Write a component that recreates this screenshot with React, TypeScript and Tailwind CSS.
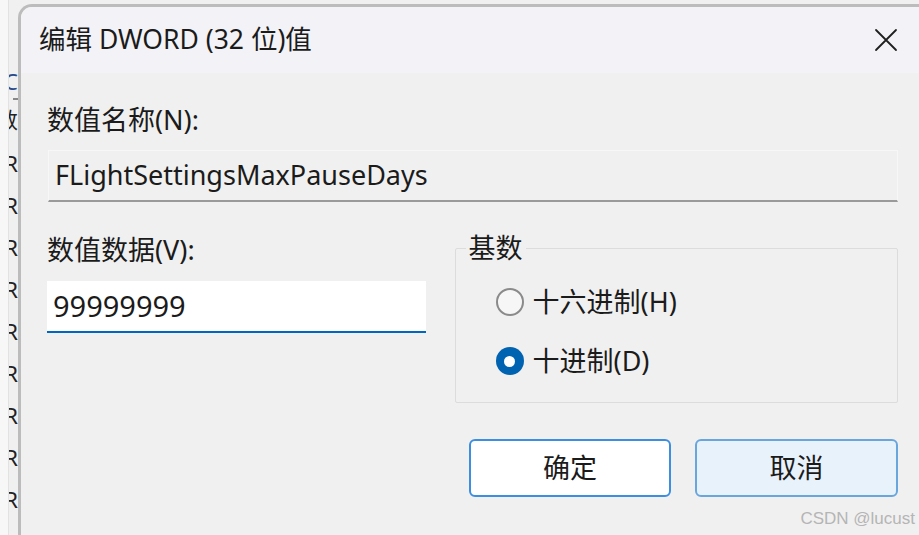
import React from "react";

const FONT = { fontFamily: '"Noto Sans", "Noto Sans CJK SC", sans-serif' };

function Radio({ checked, label }: { checked: boolean; label: string }) {
  return (
    <div className="flex items-center gap-[9px] h-[40px]">
      {checked ? (
        <div className="w-[28px] h-[28px] shrink-0 rounded-full bg-[#0063b1] flex items-center justify-center">
          <div className="w-[11px] h-[11px] rounded-full bg-white" />
        </div>
      ) : (
        <div className="w-[28px] h-[28px] shrink-0 rounded-full border-[2px] border-[#8a8a8a] bg-[#f6f6f6]" />
      )}
      <span className="text-[27px] leading-[32px] text-[#1b1b1b] whitespace-nowrap">{label}</span>
    </div>
  );
}

export default function App() {
  const bgRows = ["R", "R", "R", "R", "R", "R", "R", "R", "R"];
  return (
    <div
      className="w-[919px] h-[535px] overflow-hidden bg-[#f0f0f0] flex relative"
      style={FONT}
    >
      <div className="w-[9px] shrink-0 bg-[#f7f7f7] border-r border-[#e2e2e2]" />
      <div className="w-[9px] shrink-0 flex flex-col overflow-hidden bg-[#f0f0f0] pt-[66px]">
        <div className="h-[28px] shrink-0 flex justify-end text-[22px] leading-[30px] text-[#2a4a8a]">
          <span>C</span>
        </div>
        <div className="h-[10px] shrink-0 flex justify-end items-center">
          <div className="w-[5px] h-[2px] bg-[#888]" />
        </div>
        <div className="h-[44px] shrink-0 flex justify-end text-[22px] leading-[30px] text-[#222]">
          <span>数</span>
        </div>
        {bgRows.map((r, i) => (
          <div key={i} className="h-[42px] shrink-0 flex justify-end text-[22px] leading-[30px] text-[#222] whitespace-nowrap">
            <span>{r}</span>
          </div>
        ))}
      </div>
      <div className="flex-1 mt-[4px] rounded-tl-[14px] rounded-br-[12px] border-l-[3px] border-t-[3px] border-[#bcbcbc] flex flex-col bg-[#f0f0f0] overflow-hidden">
        <div className="h-[66px] shrink-0 bg-[#f3f3f7] flex items-center justify-between pl-[18px] pr-[20px]">
          <span className="text-[26.5px] leading-[32px] text-[#1b1b1b] mt-[-2px] whitespace-nowrap">编辑 DWORD (32 位)值</span>
          <svg width="24" height="24" viewBox="0 0 24 24" className="mr-[1px]">
            <path d="M2 2 L22 22 M22 2 L2 22" stroke="#1f1f1f" strokeWidth="1.8" strokeLinecap="round" />
          </svg>
        </div>
        <div className="flex-1 flex flex-col pl-[26px] pr-[21px] pt-[31px]">
          <div className="text-[27px] leading-[32px] text-[#1b1b1b] whitespace-nowrap">数值名称(N):</div>
          <div className="mt-[14px] h-[52px] ml-[1px] border border-[#f7f7f7] border-b-[2px] border-b-[#9a9a9a] bg-[#f0f0f0] flex items-center pl-[6px] text-[27px] text-[#1b1b1b] whitespace-nowrap">
            FLightSettingsMaxPauseDays
          </div>
          <div className="flex mt-[31px]">
            <div className="w-[379px] flex flex-col">
              <div className="text-[27px] leading-[32px] text-[#1b1b1b] mt-[1px] whitespace-nowrap">数值数据(V):</div>
              <div className="mt-[15px] h-[52px] bg-white border-b-[2px] border-[#0067c0] flex items-center pl-[6px] text-[29px] text-[#1b1b1b]">
                99999999
              </div>
            </div>
            <fieldset className="ml-[29px] w-[444px] h-[170px] border border-[#dcdcdc] rounded-[2px] p-0">
              <legend className="ml-[10px] px-[3px] text-[27px] leading-[30px] text-[#1b1b1b]">基数</legend>
              <div className="flex flex-col gap-[19px] ml-[40px] mt-[19px]">
                <Radio checked={false} label="十六进制(H)" />
                <Radio checked={true} label="十进制(D)" />
              </div>
            </fieldset>
          </div>
          <div className="flex justify-end gap-[24px] mt-[36px]">
            <button className="w-[202px] h-[58px] shrink-0 rounded-[6px] bg-white border-[2px] border-[#3c8fe0] text-[27px] text-[#1b1b1b]">
              确定
            </button>
            <button className="w-[203px] h-[58px] shrink-0 rounded-[6px] bg-[#e8f2fb] border-[2px] border-[#6aa6de] text-[27px] text-[#1b1b1b]">
              取消
            </button>
          </div>
        </div>
      </div>
      <div
        className="absolute right-[4px] bottom-[5px] text-[17px] leading-[22px] text-[#b5b5b5]"
        style={{ fontFamily: '"Liberation Sans", Arial, sans-serif' }}
      >
        CSDN @lucust
      </div>
    </div>
  );
}
